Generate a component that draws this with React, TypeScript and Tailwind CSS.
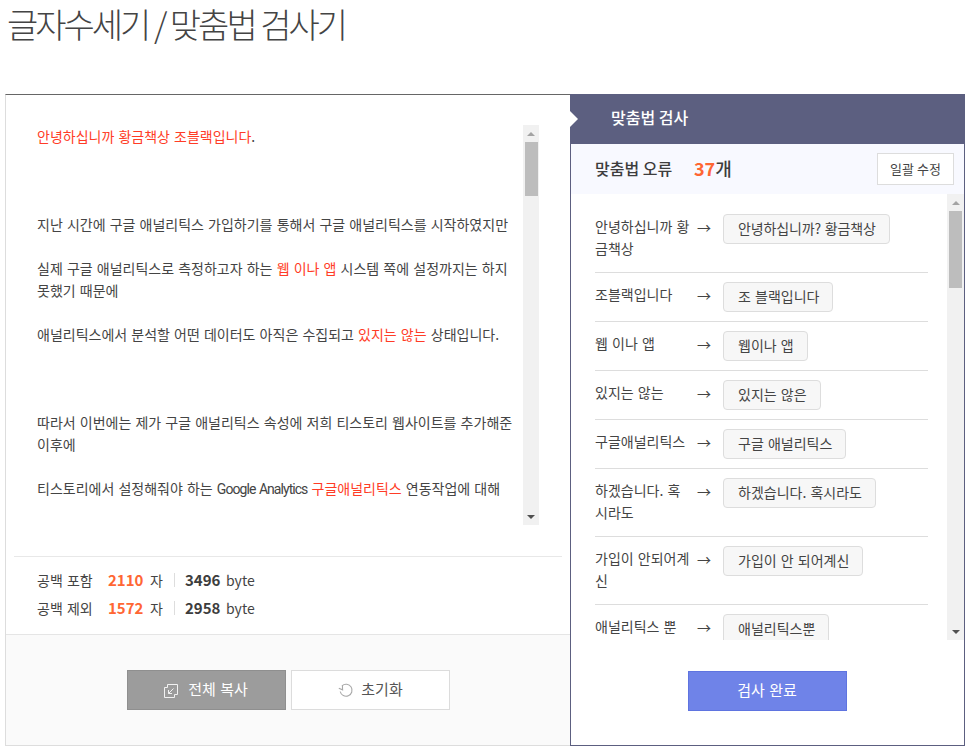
import React from "react";

const font = { fontFamily: '"Noto Sans CJK KR", "Noto Sans", sans-serif' };

function Err({ children }: { children: React.ReactNode }) {
  return <span className="text-[#ff3c26]">{children}</span>;
}

function Bar({ thumbH, className }: { thumbH: string; className: string }) {
  return (
    <div className={`flex flex-col items-center bg-[#f1f1f1] shrink-0 ${className}`}>
      <div className="h-[17px] flex items-center justify-center shrink-0">
        <div className="w-0 h-0 border-l-[4px] border-r-[4px] border-b-[4px] border-l-transparent border-r-transparent border-b-[#a3a3a3]" />
      </div>
      <div className={`w-[13px] bg-[#bdbdbd] ${thumbH}`} />
      <div className="flex-1" />
      <div className="h-[17px] flex items-center justify-center shrink-0">
        <div className="w-0 h-0 border-l-[4px] border-r-[4px] border-t-[4px] border-l-transparent border-r-transparent border-t-[#505050]" />
      </div>
    </div>
  );
}

const rows = [
  ["안녕하십니까 황금책상", "안녕하십니까? 황금책상"],
  ["조블랙입니다", "조 블랙입니다"],
  ["웹 이나 앱", "웹이나 앱"],
  ["있지는 않는", "있지는 않은"],
  ["구글애널리틱스", "구글 애널리틱스"],
  ["하겠습니다. 혹시라도", "하겠습니다. 혹시라도"],
  ["가입이 안되어계신", "가입이 안 되어계신"],
  ["애널리틱스 뿐", "애널리틱스뿐"],
];

function Stat({ label, a, b }: { label: string; a: string; b: string }) {
  return (
    <div className="flex items-center h-[28px] text-[14px] text-[#444]">
      <span className="w-[71px] [word-spacing:1px]">{label}</span>
      <span className="w-[42px] text-[15px] font-bold text-[#ff6633]">{a}</span>
      <span className="w-[24px]">자</span>
      <span className="w-px h-[14px] bg-[#ddd] mr-[10px]" />
      <span className="w-[41px] text-[15px] font-bold text-[#3d3d3d]">{b}</span>
      <span>byte</span>
    </div>
  );
}

export default function App() {
  return (
    <div className="w-[970px] h-[750px] overflow-hidden bg-white text-[#444]" style={font}>
      <div className="h-[94px] pl-[7px]">
        <h1 className="text-[34px] leading-[48px] font-light tracking-[-3px] [word-spacing:1px] text-[#444]">글자수세기 / 맞춤법 검사기</h1>
      </div>
      <div className="ml-[5px] w-[960px] h-[652px] flex">
        <div className="w-[565px] flex flex-col border-l border-b border-l-[#ddd] border-b-[#ddd] border-t border-t-[#666]">
          <div className="h-[461px] flex pl-[31px] pt-[30px] shrink-0">
            <div className="w-[485px] h-[400px] overflow-hidden text-[14px] leading-[22px] [word-spacing:1px] text-[#444]">
              <p className="h-[88px]"><Err>안녕하십니까 황금책상 조블랙입니다</Err>.</p>
              <p className="h-[44px]">지난 시간에 구글 애널리틱스 가입하기를 통해서 구글 애널리틱스를 시작하였지만</p>
              <p className="h-[66px]">실제 구글 애널리틱스로 측정하고자 하는 <Err>웹 이나 앱</Err> 시스템 쪽에 설정까지는 하지 못했기 때문에</p>
              <p className="h-[88px]">애널리틱스에서 분석할 어떤 데이터도 아직은 수집되고 <Err>있지는 않는</Err> 상태입니다.</p>
              <p className="h-[66px]">따라서 이번에는 제가 구글 애널리틱스 속성에 저희 티스토리 웹사이트를 추가해준 이후에</p>
              <p className="h-[22px]">티스토리에서 설정해줘야 하는 <span className="font-['Roboto'] tracking-[-0.95px]">Google Analytics</span> <Err>구글애널리틱스</Err> 연동작업에 대해</p>
            </div>
            <Bar thumbH="h-[54px]" className="w-[16px] h-[400px] ml-[1px]" />
          </div>
          <div className="mx-[8px] border-t border-[#e8e8e8] pl-[23px] pt-[9px] h-[78px] shrink-0">
            <Stat label="공백 포함" a="2110" b="3496" />
            <Stat label="공백 제외" a="1572" b="2958" />
          </div>
          <div className="flex-1 border-t border-[#e5e5e5] bg-[#fafafa] flex justify-center pt-[35px] gap-[5px] pl-[1px]">
            <button className="w-[159px] h-[40px] pr-[2px] bg-[#9c9c9c] border border-[#8f8f8f] flex items-center justify-center gap-[9px] text-[15px] text-white [word-spacing:1px]">
              <svg width="16" height="16" viewBox="0 0 16 16" fill="none" stroke="#f2f2f2" strokeWidth="1" className="mt-[2px]">
                <path d="M4.5 4.5H1.5V14.5H11.5V11.5" />
                <path d="M4.5 4.5V1.5H14.5V11.5H11.5" />
                <path d="M10.5 5.5L5.5 10.5M5.5 7V10.5H9" />
              </svg>
              <span className="mb-[2px]">전체 복사</span>
            </button>
            <button className="w-[159px] h-[40px] bg-white border border-[#dcdcdc] flex items-center justify-center gap-[7px] text-[15px] text-[#555]">
              <svg width="16" height="16" viewBox="0 0 16 16" fill="none" stroke="#a8a8a8" strokeWidth="1.1" className="mt-[1px]">
                <path d="M4 2.8A6 6 0 1 1 2.2 8.5" />
                <path d="M0.8 5.2L4.6 6.8L4.4 2.4" fill="none" />
              </svg>
              <span className="mb-[2px]">초기화</span>
            </button>
          </div>
        </div>
        <div className="relative w-[395px] flex flex-col border border-t-0 border-[#5c5f80]">
          <div className="absolute -left-px top-[17px] w-0 h-0 border-t-[8px] border-b-[8px] border-l-[8px] border-t-transparent border-b-transparent border-l-white" />
          <div className="h-[50px] bg-[#5c5f80] text-white text-[16px] font-medium flex items-center pl-[40px] pb-[4px] shrink-0">맞춤법 검사</div>
          <div className="h-[50px] bg-[#f8f9ff] flex items-center pl-[24px] pr-[10px] shrink-0">
            <span className="text-[16px] font-medium text-[#3d3d3d] w-[99px] mb-[2px]">맞춤법 오류</span>
            <span className="text-[18px] font-bold text-[#ff6633] mb-[2px]">37</span>
            <span className="text-[18px] font-medium text-[#3d3d3d] mb-[2px]">개</span>
            <button className="ml-auto w-[77px] h-[32px] bg-white border border-[#ddd] text-[13px] text-[#444]">일괄 수정</button>
          </div>
          <div className="h-[446px] flex shrink-0 overflow-hidden">
            <div className="w-[376px] h-[446px] overflow-hidden pl-[24px] pr-[19px] pt-[11px]">
              {rows.map(([wrong, right], i) => (
                <div key={i} className="flex items-start border-b border-[#ddd] pt-[9px] pb-[9px] text-[14px] leading-[22px] [word-spacing:1px] text-[#444]">
                  <div className="w-[97px] mt-[1px] mb-[4px] shrink-0 break-all">{wrong}</div>
                  <div className="w-[31px] shrink-0 pl-[5px] mt-[2px]">→</div>
                  <div className={`h-[30px] pl-[14px] pr-[13px] bg-[#f7f7f7] border border-[#ddd] rounded-[4px] leading-[27px] whitespace-nowrap ${i === 0 ? "tracking-[-0.15px]" : ""}`}>{right}</div>
                </div>
              ))}
            </div>
            <Bar thumbH="h-[77px]" className="w-[17px] h-[446px]" />
          </div>
          <div className="flex-1 flex justify-center pt-[31px] pr-[1px]">
            <button className="w-[159px] h-[40px] pb-[2px] bg-[#6f83e8] border border-[#5f74e0] text-white text-[15px] [word-spacing:1px]">검사 완료</button>
          </div>
        </div>
      </div>
    </div>
  );
}
